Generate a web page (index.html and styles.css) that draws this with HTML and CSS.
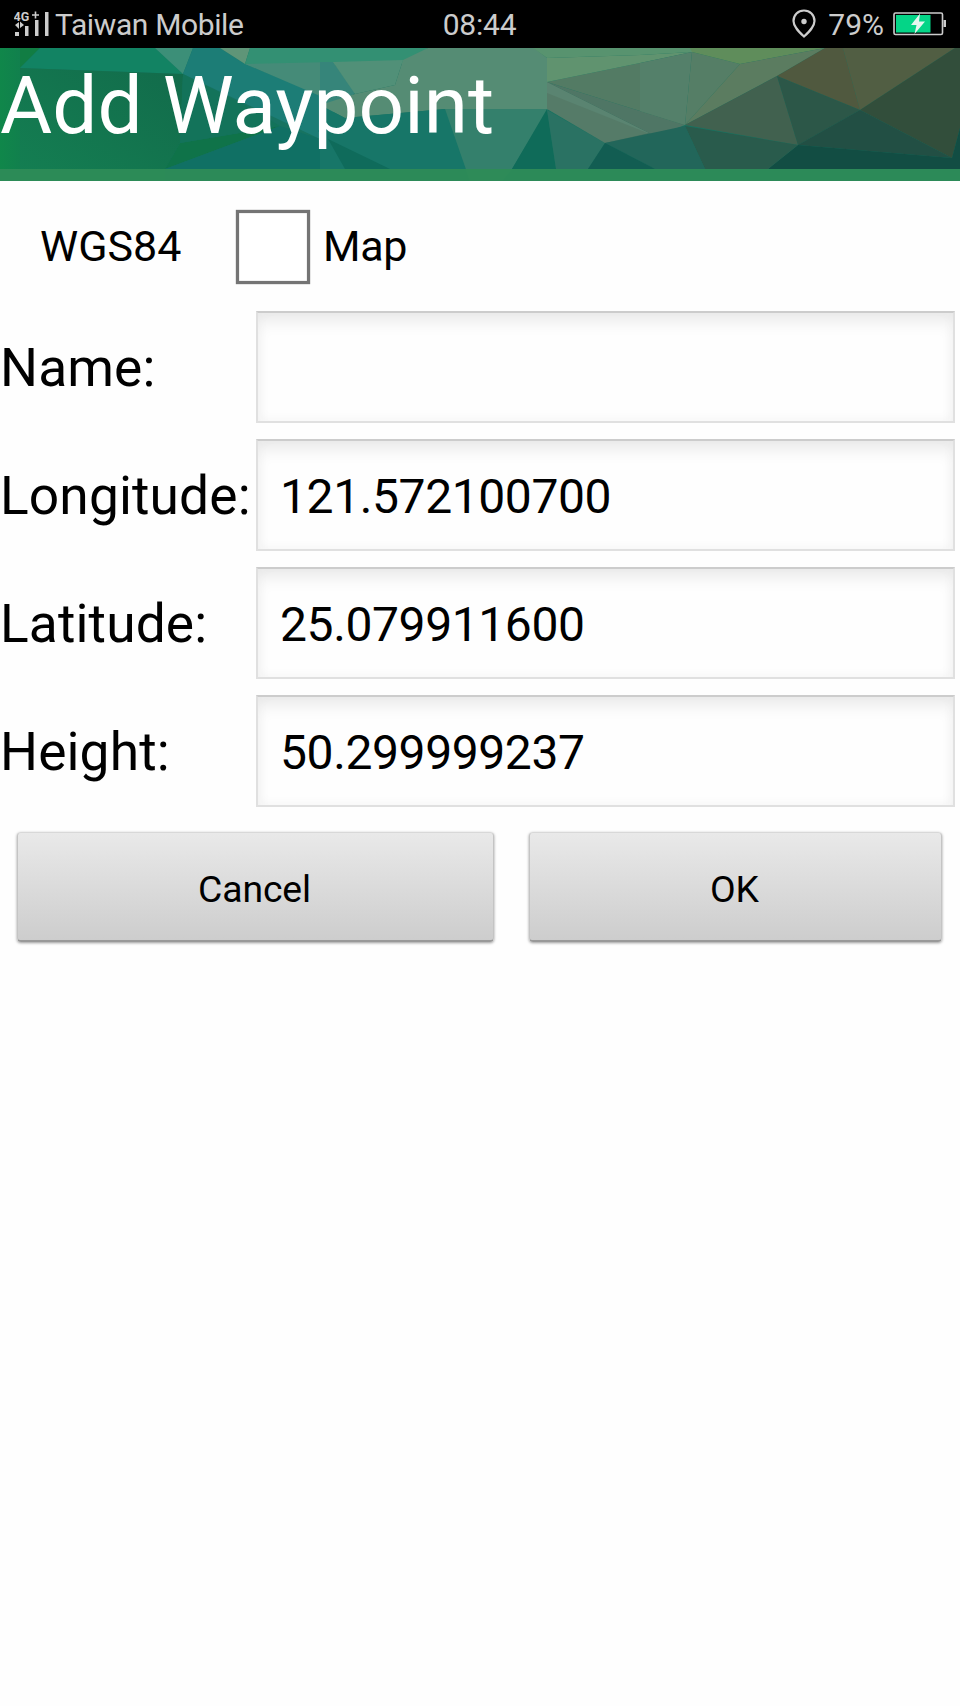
FILE: index.html
```
<!DOCTYPE html>
<html lang="en">
<head>
  <meta charset="utf-8">
  <title>Add Waypoint</title>
  <meta name="viewport" content="width=device-width, initial-scale=1.0">
  <link rel="stylesheet" href="styles.css">
</head>
<body>
  <!-- Status bar -->
  <div class="status-bar">
    <div class="status-left">
      <svg class="signal" width="36" height="28" viewBox="0 0 36 28">
        <text x="-.5" y="11" class="network">4G</text>
        <path d="M18 5h7M21.500 1.500v7" stroke="#ccc" stroke-width="1.600"/>
        <path d="M1 15l4-3v7zM6 11.500l4 3.500-4 3z" fill="#ccc"/>
        <path d="M1 22h4v4H1zM11 16h3.500v10H11zM21 10h3.500v16H21zM31 2h3.500v24H31z" fill="#ccc"/>
      </svg>
      <span class="carrier">Taiwan Mobile</span>
    </div>
    <span class="clock">08:44</span>
    <div class="status-right">
      <svg width="24" height="30" viewBox="0 0 24 30">
        <path d="M12 1.500C6 1.500 1.500 6 1.500 12c0 6 5.500 11 10.500 15.500 5-4.500 10.500-9.500 10.500-15.500C22.500 6 18 1.500 12 1.500z" fill="none" stroke="#ccc" stroke-width="2.200"/>
        <circle cx="12" cy="12.500" r="2.700" fill="#ccc"/>
      </svg>
      <span class="percent">79%</span>
      <svg width="54" height="24" viewBox="0 0 54 24">
        <rect x="1" y="1" width="48.500" height="21.500" rx="1.500" fill="none" stroke="#ccc" stroke-width="1.600"/>
        <rect x="3" y="3" width="34.500" height="17.500" fill="#04d587"/>
        <path d="M27 1.500L18 13h5.500L21.500 22 32 9.500h-6z" fill="#e4f7ef"/>
        <path d="M50.500 8h2.500v7h-2.500z" fill="#ccc"/>
      </svg>
    </div>
  </div>

  <!-- Title over the low poly background -->
  <header class="header">
    <svg class="header-bg" width="960" height="133" viewBox="0 0 960 133" preserveAspectRatio="none">
      <rect width="960" height="133" fill="#177361"/>
      <path d="M0 0h20v133H0z" fill="url(#edge)"/>
      <path d="M20 0h20L20 20z" fill="#117d43"/>
      <path d="M40 0h115l28 26-163-6z" fill="#128363"/>
      <path d="M20 20l163 6-3 69-15 26v12H20z" fill="url(#dark)"/>
      <path d="M180 95l60-10 40-7-115 43z" fill="#0f7349"/>
      <path d="M155 0h38l-10 26z" fill="#3c8f78"/>
      <path d="M193 0h27l25 16 75 31v44L183 26z" fill="#1c7d76"/>
      <path d="M183 26l60 30 37 22-100 17z" fill="#13735a"/>
      <path d="M165 121l115-43 40 13v30z" fill="#107064"/>
      <path d="M220 0h30l-5 16z" fill="#5f9578"/>
      <path d="M250 0h178l-20 15-158 3-5-2z" fill="#339073"/>
      <path d="M245 16l88-2 22 31-35 3z" fill="#458b78"/>
      <path d="M320 14h13l22 31-35 30z" fill="#36857a"/>
      <path d="M333 14l70-2-8 25-40 9z" fill="#519078"/>
      <path d="M403 12L428 0h106l13 10v51H445L345 70l-25-13 35-11 40-9z" fill="#558c74"/>
      <path d="M320 57l25 13 100-9 27 60H320z" fill="#177668"/>
      <path d="M328 91l62 30h-45z" fill="#0f6b5b"/>
      <path d="M445 61h103l-36 60-10 12h-32z" fill="#34806c"/>
      <path d="M547 61l-35 60h44z" fill="#0f6b59"/>
      <path d="M547 62l58 33-17 26h-32z" fill="#2a7263"/>
      <path d="M547 34v27l58 34 50-7z" fill="#557b68"/>
      <path d="M547 34v11l108 43z" fill="#5a8471"/>
      <path d="M655 88l30-11-80 18z" fill="#3f705f"/>
      <path d="M547 34l138 43-30 11z" fill="#4f7665"/>
      <path d="M547 34l93-19 45 62z" fill="#537b64"/>
      <path d="M533 0h160l-1 4-52 3-93 3z" fill="#58936f"/>
      <path d="M547 10l93-3 52-3-52 11-93 19z" fill="#60936f"/>
      <path d="M640 15l52-11-7 73-45-14z" fill="#54806a"/>
      <path d="M692 4l48 12-55 61z" fill="#557e66"/>
      <path d="M690 0h135l-85 16-48-12z" fill="#5f8d5b"/>
      <path d="M740 16l85-16-48 28-92 49z" fill="#5b7c60"/>
      <path d="M825 0h18l17 62-83-34z" fill="#50593f"/>
      <path d="M843 0h112l-95 62z" fill="#515e43"/>
      <path d="M777 28l-92 49 113 20z" fill="#41614f"/>
      <path d="M777 28l83 34-62 35z" fill="#2c5748"/>
      <path d="M955 0h5v80l-8 30-92-48z" fill="#324e3b"/>
      <path d="M860 62l92 48-154-13z" fill="#224f44"/>
      <path d="M798 97l154 13 8-30v41H768z" fill="#124d43"/>
      <path d="M685 78l113 19-30 24h-63z" fill="#295b4c"/>
      <path d="M605 95l80-17 20 43h-50z" fill="#22665a"/>
      <path d="M605 95l50 26h-67z" fill="#125d52"/>
      <rect y="121" width="960" height="12" fill="#2e8b57" fill-opacity=".96"/>
      <defs>
        <linearGradient id="edge">
          <stop offset="0" stop-color="#10874a"/>
          <stop offset="1" stop-color="#11804d"/>
        </linearGradient>
        <linearGradient id="dark" x1="0" x2="1" y1="1" y2="0">
          <stop offset="0" stop-color="#147f52"/>
          <stop offset="1" stop-color="#126b4b"/>
        </linearGradient>
      </defs>
    </svg>
    <h1>Add Waypoint</h1>
  </header>

  <form class="waypoint-form">
    <div class="datum-row">
      <span class="datum">WGS84</span>
      <label class="map-option">
        <input type="checkbox" class="map-check">
        <span>Map</span>
      </label>
    </div>

    <div class="field">
      <label for="name">Name:</label>
      <input id="name" type="text">
    </div>
    <div class="field">
      <label for="longitude">Longitude:</label>
      <input id="longitude" type="text" value="121.572100700">
    </div>
    <div class="field">
      <label for="latitude">Latitude:</label>
      <input id="latitude" type="text" value="25.079911600">
    </div>
    <div class="field">
      <label for="height">Height:</label>
      <input id="height" type="text" value="50.299999237">
    </div>

    <div class="buttons">
      <button type="button">Cancel</button>
      <button type="button">OK</button>
    </div>
  </form>
</body>
</html>
```
FILE: styles.css
```
* {
  box-sizing: border-box;
}
body {
  margin: 0;
  min-height: 1706px;
  background: #fefefe;
  color: #000;
  font-family: Roboto, sans-serif;
}

/* Status bar */
.status-bar {
  display: grid;
  grid-template-columns: 1fr auto 1fr;
  align-items: center;
  height: 48px;
  padding: 0 13px 0 14px;
  background: #000;
  color: #ccc;
  font-size: 30px;
}
.status-left,
.status-right {
  display: flex;
  align-items: center;
}
.status-left {
  gap: 5px;
}
.status-right {
  justify-content: flex-end;
}
.network {
  font-size: 12.5px;
  font-weight: bold;
  fill: #ccc;
}
.carrier {
  padding-top: 1px;
  letter-spacing: -0.37px;
}
.clock {
  padding-top: 1px;
  margin-right: 2px;
  letter-spacing: -0.2px;
}
.percent {
  margin: 0 9px 0 12px;
}

/* Header */
.header {
  position: relative;
  height: 133px;
}
.header-bg {
  display: block;
}
.header h1 {
  position: absolute;
  top: 11px;
  left: 0;
  margin: 0;
  color: #fff;
  font-size: 80px;
  font-weight: normal;
  line-height: 94px;
  letter-spacing: 0.1px;
  white-space: nowrap;
}

/* Form */
.datum-row {
  display: flex;
  align-items: center;
  height: 122px;
  padding: 10px 0 0 40px;
  font-size: 43px;
}
.datum {
  width: 196px;
}
.datum,
.map-option span {
  margin-top: -2px;
}
.map-option {
  display: flex;
  align-items: center;
  gap: 13px;
  letter-spacing: -0.4px;
}
.map-check {
  appearance: none;
  width: 74px;
  height: 74px;
  margin: 0;
  border: 3px solid #747474;
  background: #fff;
  box-shadow: 0 0 1px #747474, inset 0 0 1px #747474;
}
.field {
  display: grid;
  grid-template-columns: 256px 699px;
  align-items: center;
  height: 128px;
}
.field label {
  padding-top: 1px;
  font-size: 53.3px;
  letter-spacing: 0.12px;
  white-space: nowrap;
}
.field input {
  height: 112px;
  padding: 2px 22px 0;
  border: 2px solid #e0e0e0;
  border-top-color: #ccc;
  border-radius: 0;
  outline: none;
  background: #fefefe;
  box-shadow: inset 0 12px 18px -6px #e6e6e6, inset 0 0 12px #f4f4f4;
  color: #000;
  font-family: inherit;
  font-size: 48px;
  letter-spacing: -0.4px;
}
.buttons {
  display: grid;
  grid-template-columns: 477px 413px;
  gap: 35px;
  padding: 17px 17px 0;
}
.buttons button {
  height: 110px;
  padding: 4px 2px 0 0;
  border: 1px solid #c4c4c4;
  border-top-color: #d8d8d8;
  border-bottom: 2px solid #999;
  border-radius: 4px;
  background: linear-gradient(#e9e9e9, #cdcdcd);
  box-shadow: 0 1px 3px rgba(0, 0, 0, 0.4);
  color: #000;
  font-family: inherit;
  font-size: 37.3px;
  letter-spacing: -0.1px;
}
```
